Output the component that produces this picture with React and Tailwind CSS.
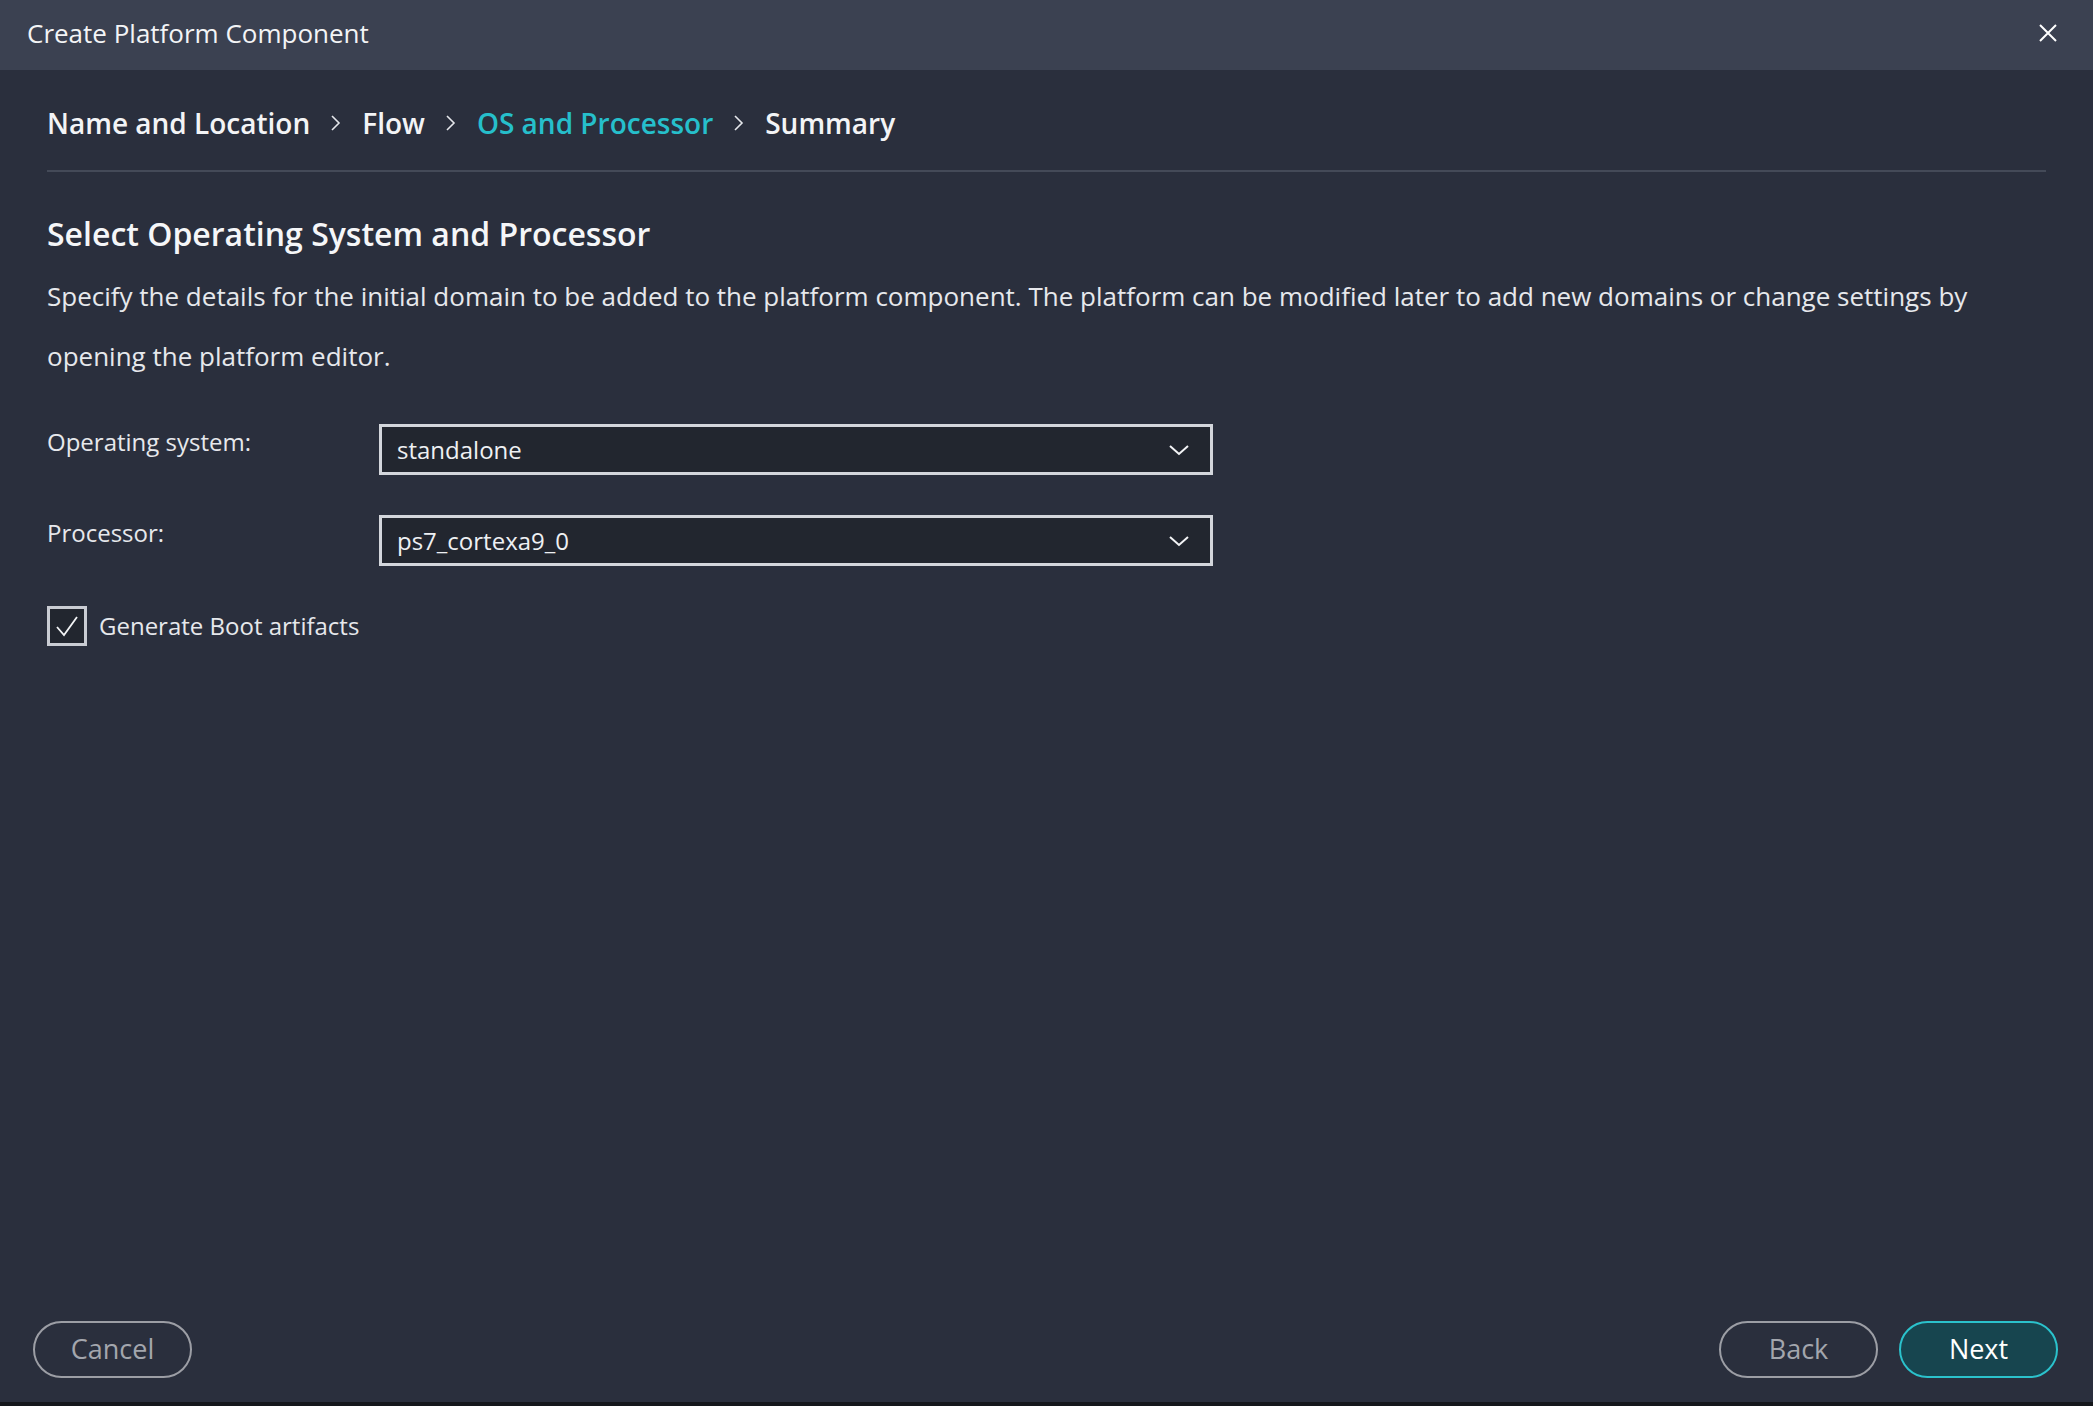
import React from 'react';

const Chevron = () => (
    <svg width="14" height="22" viewBox="0 0 14 22" fill="none" className="shrink-0">
        <path d="M3 4l7 7-7 7" stroke="#e5e7eb" strokeWidth="1.6" />
    </svg>
);

const DownArrow = () => (
    <svg width="22" height="12" viewBox="0 0 22 12" fill="none">
        <path d="M2 2l9 8 9-8" stroke="#f3f4f6" strokeWidth="2" />
    </svg>
);

const Select = ({ value }) => (
    <div className="w-[834px] h-[51px] border-[3px] border-[#d3d6dc] bg-[#22262f] flex items-center justify-between pl-[15px] pr-[20px]">
        <span className="text-[24px] text-[#eef0f3]">{value}</span>
        <DownArrow />
    </div>
);

const Field = ({ label, value }) => (
    <div className="flex items-start">
        <div className="w-[332px] leading-[36px] text-[24px] text-[#e6e8ec]">{label}</div>
        <Select value={value} />
    </div>
);

const App = () => {
    const steps = ['Name and Location', 'Flow', 'OS and Processor', 'Summary'];

    return (
        <div className="h-[1406px] flex flex-col bg-[#2a2f3d] text-white font-['Open_Sans',sans-serif]">
            <div className="h-[70px] shrink-0 bg-[#3b4151] flex items-center justify-between pl-[27px] pr-[36px] pb-[4px]">
                <span className="text-[26px] text-[#f3f4f6]">Create Platform Component</span>
                <svg width="18" height="18" viewBox="0 0 18 18" fill="none">
                    <path d="M1 1l16 16M17 1L1 17" stroke="#ffffff" strokeWidth="2" />
                </svg>
            </div>

            <div className="flex-1 px-[47px] pt-[33px]">
                <div className="flex items-center gap-[19px] h-[40px]">
                    {steps.map((s, i) => (
                        <React.Fragment key={s}>
                            {i > 0 && <Chevron />}
                            <span className={`text-[28px] font-semibold ${i === 2 ? 'text-[#26bfcb]' : 'text-[#f3f4f6]'}`}>
                                {s}
                            </span>
                        </React.Fragment>
                    ))}
                </div>
                <div className="mt-[27px] h-[2px] bg-[#444a58]" />

                <h1 className="mt-[42px] text-[32px] leading-[40px] font-semibold text-[#f5f6f8]">
                    Select Operating System and Processor
                </h1>
                <p className="mt-[12px] text-[26px] leading-[60px] text-[#e6e8ec] pr-[20px]">
                    Specify the details for the initial domain to be added to the platform component. The platform can be modified later to add new domains or change settings by opening the platform editor.
                </p>

                <div className="mt-[38px] flex flex-col gap-[40px]">
                    <Field label="Operating system:" value="standalone" />
                    <Field label="Processor:" value="ps7_cortexa9_0" />
                    <label className="flex items-center gap-[12px]">
                        <span className="w-[40px] h-[40px] border-[3px] border-[#c9ccd3] bg-[#22262f] flex items-center justify-center">
                            <svg width="24" height="22" viewBox="0 0 24 22" fill="none">
                                <path d="M2 12l7 8L22 2" stroke="#f3f4f6" strokeWidth="1.8" />
                            </svg>
                        </span>
                        <span className="text-[24px] text-[#e6e8ec]">Generate Boot artifacts</span>
                    </label>
                </div>
            </div>

            <div className="flex items-center justify-between pl-[33px] pr-[35px] pb-[24px]">
                <button className="w-[159px] h-[57px] rounded-full border-2 border-[#9c9ea5] text-[27px] text-[#a3a6ad]">
                    Cancel
                </button>
                <div className="flex gap-[21px]">
                    <button className="w-[159px] h-[57px] rounded-full border-2 border-[#9c9ea5] text-[27px] text-[#a3a6ad]">
                        Back
                    </button>
                    <button className="w-[159px] h-[57px] rounded-full border-2 border-[#2bc2cc] bg-[#17454f] text-[27px] text-white">
                        Next
                    </button>
                </div>
            </div>
            <div className="h-[4px] shrink-0 bg-[#15171c]" />
        </div>
    );
};

export default App;
